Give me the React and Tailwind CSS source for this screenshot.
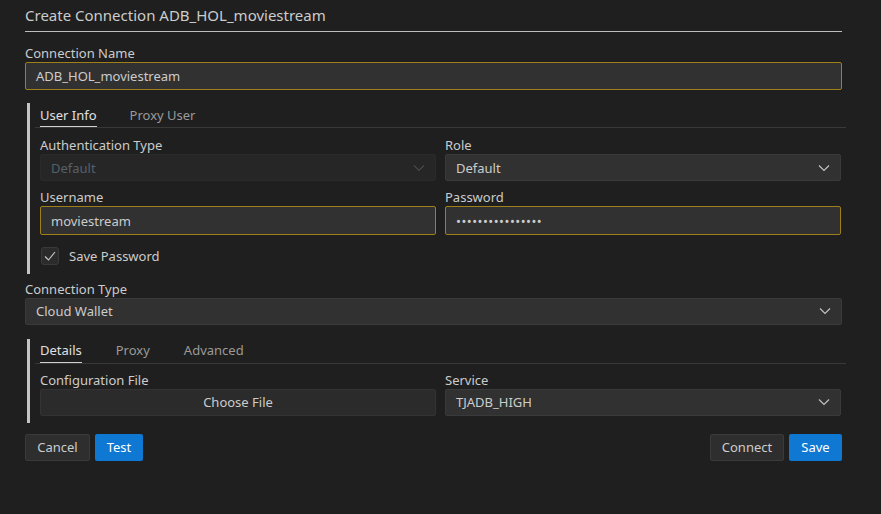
import { useState } from 'react'

const font = { fontFamily: '"Noto Sans", "Open Sans", sans-serif' }

function Chevron() {
  return (
    <svg width="12" height="8" viewBox="0 0 12 8" className="shrink-0">
      <polyline points="1,1.5 6,6.5 11,1.5" fill="none" stroke="currentColor" strokeWidth="1.1" />
    </svg>
  )
}

function Label({ children }) {
  return <div className="h-[19px] leading-[20px] text-[13px] text-[#cccccc]">{children}</div>
}

function Select({ value, disabled }) {
  return (
    <div
      className={`h-[27px] flex items-center justify-between pl-[10px] pr-[10px] pt-[2px] rounded-[2px] border text-[13px] ${
        disabled
          ? 'bg-[#262626] border-[#2a2a2a] text-[#55606a]'
          : 'bg-[#313131] border-[#3a3a3a] text-[#cccccc]'
      }`}
    >
      <span>{value}</span>
      <span className={`-mt-[2px] ${disabled ? 'text-[#4a4a4a]' : 'text-[#c5c5c5]'}`}>
        <Chevron />
      </span>
    </div>
  )
}

function Input({ value, className = '' }) {
  return (
    <div
      className={`h-[28px] flex items-center pl-[10px] pt-[2px] rounded-[2px] border border-[#9e7f1a] bg-[#313131] text-[13px] text-[#cccccc] ${className}`}
    >
      {value}
    </div>
  )
}

function Tabs({ tabs, active, onPick, gap }) {
  return (
    <div className="flex border-b border-[#383838] pl-[5px]">
      {tabs.map((t, i) => (
        <button
          key={t}
          onClick={() => onPick(i)}
          className={`h-[24px] text-[13px] leading-[20px] border-b ${gap} ${
            i === active ? 'text-[#e0e0e0] border-[#d0d0d0]' : 'text-[#9a9a9a] border-transparent'
          }`}
        >
          {t}
        </button>
      ))}
    </div>
  )
}

function Button({ children, primary, className = '' }) {
  return (
    <button
      className={`h-[27px] pt-[1px] rounded-[2px] text-[13px] ${
        primary
          ? 'bg-[#0e78d3] text-white'
          : 'bg-[#2e2e2e] border border-[#3a3a3a] text-[#cccccc]'
      } ${className}`}
    >
      {children}
    </button>
  )
}

export default function App() {
  const [userTab, setUserTab] = useState(0)
  const [connTab, setConnTab] = useState(0)

  return (
    <div className="w-[881px] h-[514px] bg-[#1f1f1f] overflow-hidden" style={font}>
      <div className="ml-[25px] w-[817px]">
        <div className="h-[32px] leading-[30px] text-[15px] text-[#cccccc] border-b border-[#bdbdbd]">
          Create Connection ADB_HOL_moviestream
        </div>

        <div className="mt-[11px]">
          <Label>Connection Name</Label>
          <Input value="ADB_HOL_moviestream" />
        </div>

        {/* User info group */}
        <div className="mt-[13px] ml-[2px] w-[819px] border-l-[3px] border-[#c4c4c4] pl-[5px] pb-[7px]">
          <Tabs
            tabs={['User Info', 'Proxy User']}
            active={userTab}
            onPick={setUserTab}
            gap="mr-[33px]"
          />
          <div className="pl-[5px] pr-[5px]">
            <div className="grid grid-cols-2 gap-x-[9px] mt-[7px]">
              <div>
                <Label>Authentication Type</Label>
                <Select value="Default" disabled />
              </div>
              <div>
                <Label>Role</Label>
                <Select value="Default" />
              </div>
            </div>
            <div className="grid grid-cols-2 gap-x-[9px] mt-[6px]">
              <div>
                <Label>Username</Label>
                <Input value="moviestream" className="h-[29px]" />
              </div>
              <div>
                <Label>Password</Label>
                <Input value="••••••••••••••••" className="h-[29px] tracking-[0.5px] text-[13px]" />
              </div>
            </div>
            <div className="flex items-center mt-[11px]">
              <div className="w-[18px] h-[18px] ml-[1px] rounded-[3px] bg-[#2b2b2b] border border-[#3a3a3a] flex items-center justify-center text-[#c8c8c8]">
                <svg width="14" height="14" viewBox="0 0 14 14">
                  <polyline points="2,7.5 5.5,11 12,3" fill="none" stroke="currentColor" strokeWidth="1.1" />
                </svg>
              </div>
              <span className="ml-[10px] pt-[1px] text-[13px] text-[#cccccc]">Save Password</span>
            </div>
          </div>
        </div>

        <div className="mt-[5px]">
          <Label>Connection Type</Label>
          <Select value="Cloud Wallet" />
        </div>

        {/* Connection details group */}
        <div className="mt-[14px] ml-[2px] w-[819px] border-l-[3px] border-[#c4c4c4] pl-[5px] pb-[7px]">
          <Tabs
            tabs={['Details', 'Proxy', 'Advanced']}
            active={connTab}
            onPick={setConnTab}
            gap="mr-[34px]"
          />
          <div className="pl-[5px] pr-[5px]">
            <div className="grid grid-cols-2 gap-x-[9px] mt-[6px]">
              <div>
                <Label>Configuration File</Label>
                <button className="w-full h-[27px] pt-[1px] rounded-[2px] bg-[#2b2b2b] border border-[#333333] text-[13px] text-[#cccccc]">
                  Choose File
                </button>
              </div>
              <div>
                <Label>Service</Label>
                <Select value="TJADB_HIGH" />
              </div>
            </div>
          </div>
        </div>

        <div className="flex mt-[11px]">
          <div className="flex gap-[5px]">
            <Button className="w-[65px]">Cancel</Button>
            <Button primary className="w-[48px]">Test</Button>
          </div>
          <div className="flex gap-[5px] ml-auto">
            <Button className="w-[74px]">Connect</Button>
            <Button primary className="w-[53px]">Save</Button>
          </div>
        </div>
      </div>
    </div>
  )
}
